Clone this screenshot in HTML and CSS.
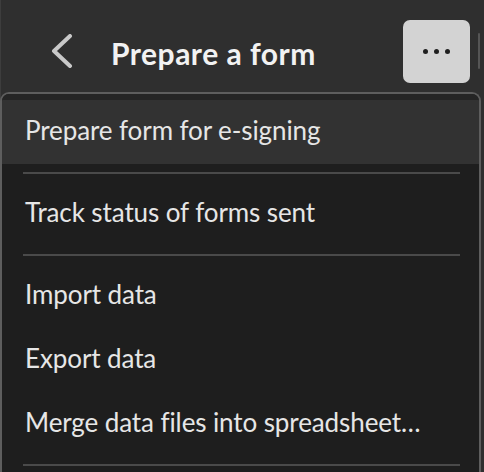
FILE: index.html
```html
<!DOCTYPE html>
<html lang="en">
<head>
<meta charset="utf-8">
<title>Prepare a form</title>
<link rel="stylesheet" href="styles.css">
</head>
<body>
<div class="app">
  <header class="topbar">
    <button class="back" aria-label="Back">
      <svg width="24" height="34" viewBox="0 0 24 34"><path d="M20 2 L4 17 L20 32" fill="none" stroke="#c9c9c9" stroke-width="4" stroke-linecap="round" stroke-linejoin="round"/></svg>
    </button>
    <h1 class="title">Prepare a form</h1>
    <button class="more" aria-label="More options"><span class="dot"></span><span class="dot"></span><span class="dot"></span></button>
    <span class="scroll"></span>
  </header>
  <nav class="menu">
    <ul class="menu-list">
      <li class="item active">Prepare form for e-signing</li>
      <li class="sep"></li>
      <li class="item">Track status of forms sent</li>
      <li class="sep"></li>
      <li class="item">Import data</li>
      <li class="item">Export data</li>
      <li class="item">Merge data files into spreadsheet…</li>
      <li class="sep"></li>
    </ul>
  </nav>
</div>
</body>
</html>
```
FILE: styles.css
```css
html, body {
  margin: 0;
  padding: 0;
  background: #2f2f2f;
}
body {
  width: 484px;
  height: 472px;
  overflow: hidden;
  font-family: Lato, "Open Sans", sans-serif;
}
.app {
  display: flex;
  flex-direction: column;
  height: 472px;
  border-left: 1px solid #3d3d3d;
  box-sizing: border-box;
}
.topbar {
  display: flex;
  align-items: center;
  height: 92px;
  padding-top: 10px;
  padding-left: 49px;
  box-sizing: border-box;
  flex: none;
}
.back {
  background: none;
  border: 0;
  padding: 0;
  width: 24px;
  height: 34px;
  display: flex;
}
.title {
  margin: 3px 0 0 37px;
  font-size: 30px;
  font-weight: 700;
  color: #f2f2f2;
  letter-spacing: 0.5px;
}
.more {
  margin-left: auto;
  width: 67px;
  height: 63px;
  border: 0;
  border-radius: 7px;
  background: #d3d3d3;
  display: flex;
  align-items: center;
  justify-content: center;
  gap: 6px;
  padding: 0;
}
.dot {
  width: 5px;
  height: 5px;
  border-radius: 50%;
  background: #1f1f1f;
}
.scroll {
  width: 2px;
  height: 36px;
  margin: 0 4px 0 8px;
  background: #555;
  border-radius: 1px;
}
.menu {
  flex: 1;
  margin-right: 3px;
  margin-left: -1px;
  border: 2px solid #5e5e5e;
  border-bottom: 0;
  border-radius: 9px 9px 0 0;
  background: #1e1e1e;
  overflow: hidden;
}
.menu-list {
  list-style: none;
  margin: 0;
  padding: 0;
  border-top: 6px solid #252525;
}
.item {
  height: 64px;
  display: flex;
  align-items: center;
  padding: 0 0 4px 23px;
  box-sizing: border-box;
  font-size: 26px;
  color: #e6e6e6;
  white-space: nowrap;
  letter-spacing: -0.1px;
}
.item.active {
  background: #323232;
}
.sep {
  height: 2px;
  margin: 8px 19px 8px 21px;
  background: #4a4a4a;
}
```
